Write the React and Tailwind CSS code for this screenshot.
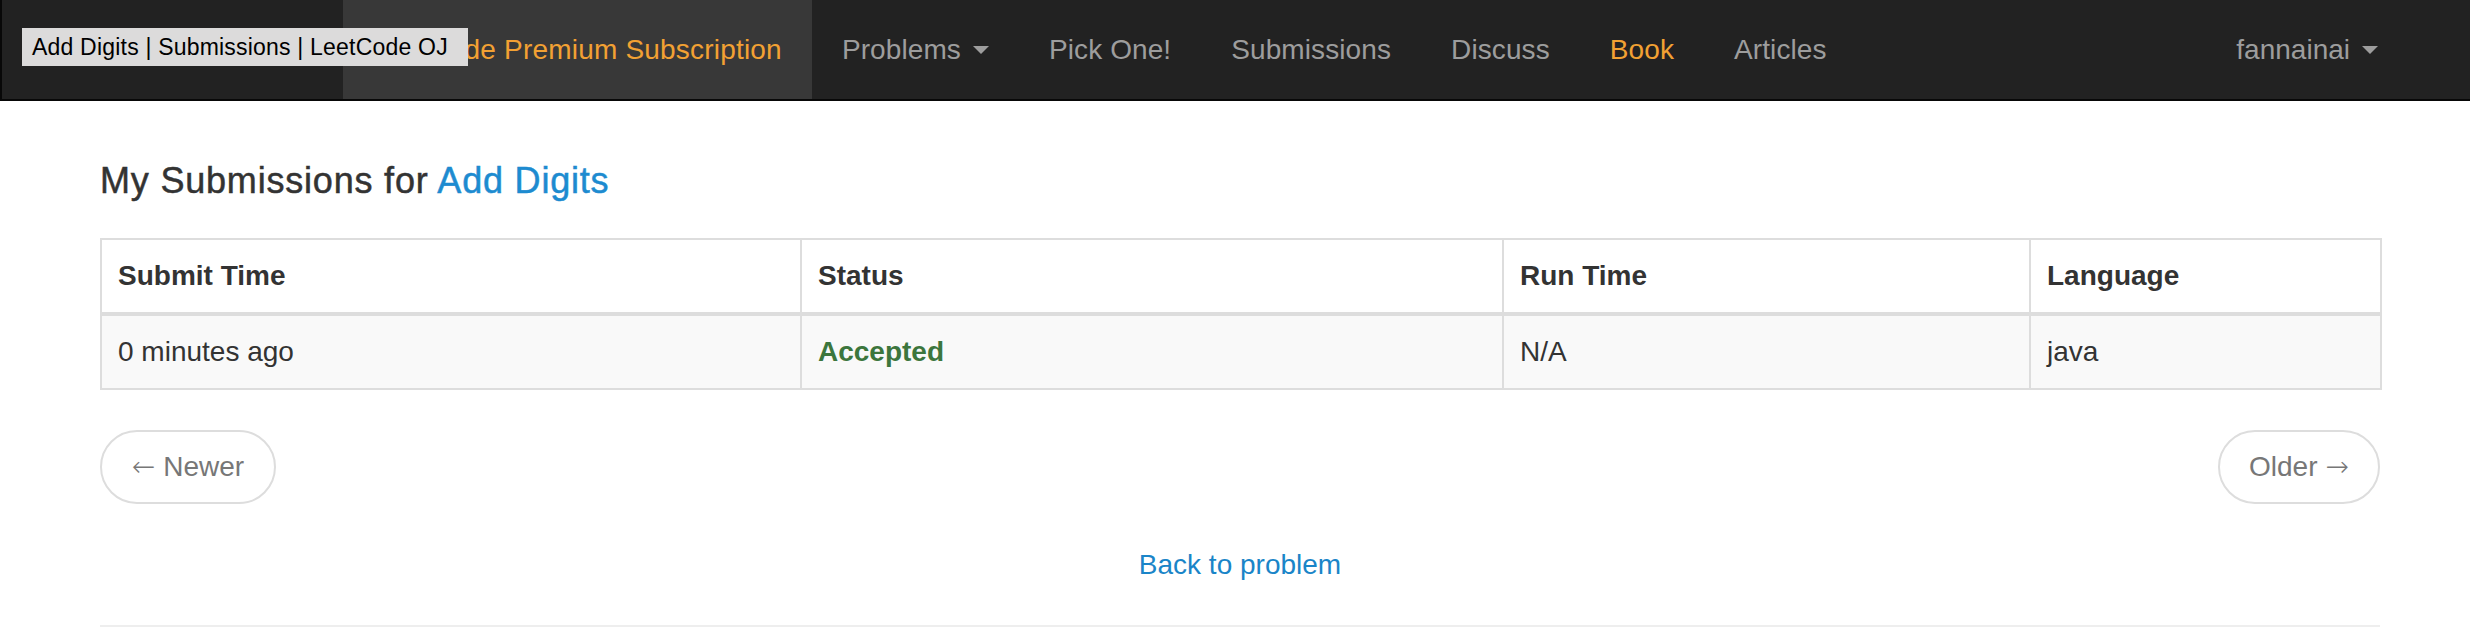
import React from 'react';

const navItems = [
  { label: 'Problems', caret: true },
  { label: 'Pick One!' },
  { label: 'Submissions' },
  { label: 'Discuss' },
  { label: 'Book', active: true },
  { label: 'Articles' },
];

const Caret = () => (
  <span className="ml-[12px] inline-block h-0 w-0 border-x-8 border-t-8 border-x-transparent border-t-[#9d9d9d]" />
);

const Navbar = () => (
  <nav className="relative flex h-[101px] border-b-2 border-l-2 border-[#080808] bg-[#222]">
    <div className="w-[341px]" />
    <a className="flex items-center bg-[#383838] px-[30px] text-[28px] tracking-[0.2px] text-[#f2a133]">
      LeetCode Premium Subscription
    </a>
    <ul className="flex">
      {navItems.map((item) => (
        <li
          key={item.label}
          className={`flex items-center px-[30px] text-[28px] tracking-[0.1px] ${item.active ? 'text-[#f2a133]' : 'text-[#9d9d9d]'}`}
        >
          {item.label}
          {item.caret && <Caret />}
        </li>
      ))}
    </ul>
    <div className="ml-auto flex pr-[62px]">
      <div className="flex items-center px-[30px] text-[28px] text-[#9d9d9d]">
        fannainai
        <Caret />
      </div>
    </div>

    {/* browser title tooltip over the navbar */}
    <div className="absolute left-[20px] top-[28px] flex h-[38px] w-[446px] items-center bg-[#dcdbdb] px-[10px] text-[23px] tracking-[0.2px] text-black">
      Add Digits | Submissions | LeetCode OJ
    </div>
  </nav>
);

const SubmissionsTable = () => (
  <table className="mt-[37px] w-[2280px] table-fixed border-collapse border-2 border-[#ddd] text-[28px] leading-[40px] text-[#333]">
    <colgroup>
      <col className="w-[700px]" />
      <col className="w-[702px]" />
      <col className="w-[527px]" />
      <col className="w-[351px]" />
    </colgroup>
    <thead>
      <tr className="bg-white">
        {['Submit Time', 'Status', 'Run Time', 'Language'].map((h) => (
          <th key={h} className="border-2 border-b-4 border-[#ddd] p-[16px] text-left font-bold">
            {h}
          </th>
        ))}
      </tr>
    </thead>
    <tbody>
      <tr className="bg-[#f9f9f9]">
        <td className="border-2 border-[#ddd] p-[16px]">0 minutes ago</td>
        <td className="border-2 border-[#ddd] p-[16px] font-bold text-[#3c763d]">Accepted</td>
        <td className="border-2 border-[#ddd] p-[16px]">N/A</td>
        <td className="border-2 border-[#ddd] p-[16px]">java</td>
      </tr>
    </tbody>
  </table>
);

const PagerButton = ({ children, width }) => (
  <a className={`flex h-[74px] items-center justify-center gap-[8px] rounded-full border-2 border-[#ddd] bg-white text-[28px] text-[#777] ${width}`}>
    {children}
  </a>
);

const Arrow = ({ children }) => (
  <span className="font-['DejaVu_Sans',sans-serif] text-[28px] font-light">{children}</span>
);

export default function App() {
  return (
    <div className="min-h-[628px] w-full bg-white font-['Liberation_Sans',Arial,sans-serif]">
      <Navbar />
      <main className="w-[2380px] pl-[100px]">
        <h4 className="mt-[60px] text-[36px] leading-[40px] tracking-[0.8px] text-[#333] [-webkit-text-stroke:0.5px_#333]">
          My Submissions for{' '}
          <a className="text-[#1d8bd0] [-webkit-text-stroke:0.5px_#1d8bd0]">Add Digits</a>
        </h4>
        <SubmissionsTable />
        <div className="mt-[40px] flex justify-between">
          <PagerButton width="w-[176px]">
            <Arrow>←</Arrow>
            <span>Newer</span>
          </PagerButton>
          <PagerButton width="w-[162px]">
            <span>Older</span>
            <Arrow>→</Arrow>
          </PagerButton>
        </div>
        <div className="mt-[41px] text-center text-[28px] leading-[40px]">
          <a className="text-[#1a85c8]">Back to problem</a>
        </div>
        <hr className="mt-[40px] border-t-2 border-[#eee]" />
      </main>
    </div>
  );
}
